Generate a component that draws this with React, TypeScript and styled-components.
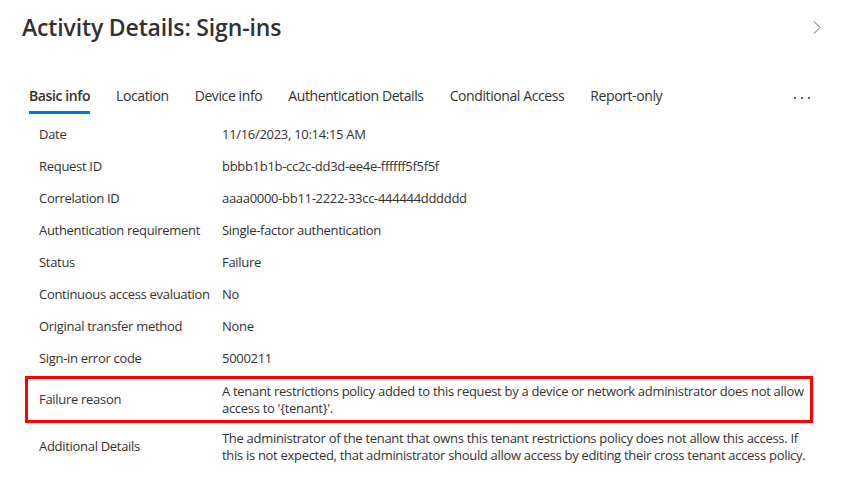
import React from 'react';
import styled, { createGlobalStyle } from 'styled-components';

const GlobalStyle = createGlobalStyle`
    body {
        margin: 0;
        background: #ffffff;
        font-family: 'Open Sans', 'Liberation Sans', sans-serif;
        color: #323130;
    }
`;

const rows: { label: string; value: React.ReactNode; tall?: boolean; highlight?: boolean }[] = [
    { label: 'Date', value: '11/16/2023, 10:14:15 AM' },
    { label: 'Request ID', value: 'bbbb1b1b-cc2c-dd3d-ee4e-ffffff5f5f5f' },
    { label: 'Correlation ID', value: 'aaaa0000-bb11-2222-33cc-444444dddddd' },
    { label: 'Authentication requirement', value: 'Single-factor authentication' },
    { label: 'Status', value: 'Failure' },
    { label: 'Continuous access evaluation', value: 'No' },
    { label: 'Original transfer method', value: 'None' },
    { label: 'Sign-in error code', value: '5000211' },
    {
        label: 'Failure reason',
        value: (
            <>
                A tenant restrictions policy added to this request by a device or network administrator does not allow
                <br />
                access to '{'{tenant}'}'.
            </>
        ),
        tall: true,
        highlight: true,
    },
    {
        label: 'Additional Details',
        value: (
            <>
                The administrator of the tenant that owns this tenant restrictions policy does not allow this access. If
                <br />
                this is not expected, that administrator should allow access by editing their cross tenant access policy.
            </>
        ),
        tall: true,
    },
];

const tabs = ['Basic info', 'Location', 'Device info', 'Authentication Details', 'Conditional Access', 'Report-only'];

export default function App() {
    return (
        <>
            <GlobalStyle />
            <Panel>
                <Header>
                    <Title>Activity Details: Sign-ins</Title>
                    <IconButton aria-label='Expand'>
                        <svg width='8' height='13' viewBox='0 0 8 13'>
                            <path d='M1 0.5 L7 6.5 L1 12.5' fill='none' stroke='#605e5c' strokeWidth='1' />
                        </svg>
                    </IconButton>
                </Header>
                <TabBar>
                    <TabList>
                        {tabs.map((t, i) => (
                            <Tab key={t} $active={i === 0}>
                                {t}
                            </Tab>
                        ))}
                    </TabList>
                    <More aria-label='More'>
                        <Dot />
                        <Dot />
                        <Dot />
                    </More>
                </TabBar>
                <Details>
                    {rows.map((r) => (
                        <Row key={r.label} $tall={r.tall} $highlight={r.highlight}>
                            <Label>{r.label}</Label>
                            <Value>{r.value}</Value>
                        </Row>
                    ))}
                </Details>
            </Panel>
        </>
    );
}

const Panel = styled.div`
    width: 841px;
    height: 485px;
    overflow: hidden;
`;

const Header = styled.div`
    display: flex;
    align-items: center;
    justify-content: space-between;
    padding: 12px 18px 0 22px;
    height: 30px;
`;

const Title = styled.h1`
    margin: 0;
    font-size: 23px;
    font-weight: 600;
    letter-spacing: -0.15px;
    color: #323130;
`;

const IconButton = styled.div`
    display: flex;
    align-items: center;
    justify-content: center;
    width: 12px;
    height: 16px;
`;

const TabBar = styled.div`
    display: flex;
    align-items: center;
    justify-content: space-between;
    margin-top: 38px;
    padding: 0 31px 0 16px;
`;

const TabList = styled.div`
    display: flex;
`;

const Tab = styled.div<{ $active?: boolean }>`
    position: relative;
    padding: 6px 13px 10px;
    font-size: 14px;
    letter-spacing: -0.4px;
    font-weight: ${(p) => (p.$active ? 600 : 400)};
    color: #323130;
    white-space: nowrap;

    &::after {
        content: '';
        position: absolute;
        left: 13px;
        right: 13px;
        bottom: 1px;
        height: 3px;
        background: ${(p) => (p.$active ? '#0078d4' : 'transparent')};
    }
`;

const More = styled.div`
    display: flex;
    gap: 5px;
`;

const Dot = styled.span`
    width: 2px;
    height: 2px;
    background: #605e5c;
`;

const Details = styled.div`
    margin: 3px 28px 0 25px;
    display: flex;
    flex-direction: column;
`;

const Row = styled.div<{ $tall?: boolean; $highlight?: boolean }>`
    display: grid;
    grid-template-columns: 183px 1fr;
    align-items: center;
    min-height: ${(p) => (p.$tall ? '47px' : '32px')};
    margin-top: ${(p) => (p.$highlight ? '2px' : '0')};
    padding-left: 11px;
    border: 3px solid ${(p) => (p.$highlight ? '#ff0000' : 'transparent')};
    box-sizing: border-box;
    font-size: 13px;
    line-height: 17px;
    letter-spacing: -0.3px;
`;

const Label = styled.div`
    color: #323130;
`;

const Value = styled.div`
    color: #323130;
    white-space: nowrap;
`;
